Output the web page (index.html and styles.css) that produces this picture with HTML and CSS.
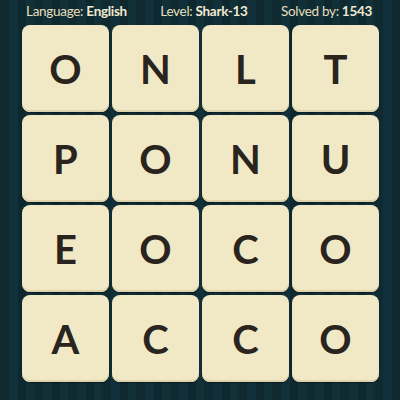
FILE: index.html
```html
<!DOCTYPE html>
<html>
<head>
<meta charset="utf-8">
<link rel="stylesheet" href="styles.css">
</head>
<body>
<div class="page">
  <div class="header">
    <span class="item">Language: <b>English</b></span>
    <span class="item">Level: <b>Shark-13</b></span>
    <span class="item">Solved by: <b>1543</b></span>
  </div>
  <div class="board">
    <div class="tile">O</div><div class="tile">N</div><div class="tile">L</div><div class="tile">T</div>
    <div class="tile">P</div><div class="tile">O</div><div class="tile">N</div><div class="tile">U</div>
    <div class="tile">E</div><div class="tile">O</div><div class="tile">C</div><div class="tile">O</div>
    <div class="tile">A</div><div class="tile">C</div><div class="tile">C</div><div class="tile">O</div>
  </div>
</div>
</body>
</html>
```
FILE: styles.css
```css
html, body {
  margin: 0;
  padding: 0;
}
body {
  width: 400px;
  height: 400px;
  overflow: hidden;
  background-color: #0f2a31;
  background-image: repeating-linear-gradient(90deg,
    #0f2a31 0px, #0f2a31 9px,
    #12303a 9px, #12303a 18px,
    #0e2830 18px, #0e2830 26px,
    #113038 26px, #113038 34px);
  font-family: Lato, "Open Sans", sans-serif;
}
.page {
  display: flex;
  flex-direction: column;
}
.header {
  height: 25px;
  display: flex;
  justify-content: space-between;
  align-items: center;
  padding: 0 28px 3px 26px;
  box-sizing: border-box;
  color: #e6dfbd;
  font-size: 13.5px;
  letter-spacing: -0.3px;
}
.header b {
  font-weight: 700;
  color: #f1ead0;
}
.board {
  display: grid;
  grid-template-columns: repeat(4, 87px);
  grid-template-rows: repeat(4, 87px);
  gap: 3px;
  padding-left: 22px;
}
.tile {
  background: #f1e9c6;
  border-radius: 8px;
  box-shadow: inset 0 -2px 0 #ddd3ac, 0 1px 1px rgba(0,0,0,0.4);
  display: flex;
  align-items: center;
  justify-content: center;
  font-size: 40px;
  font-weight: 700;
  color: #2a241e;
  padding-top: 1px;
  box-sizing: border-box;
}
```
